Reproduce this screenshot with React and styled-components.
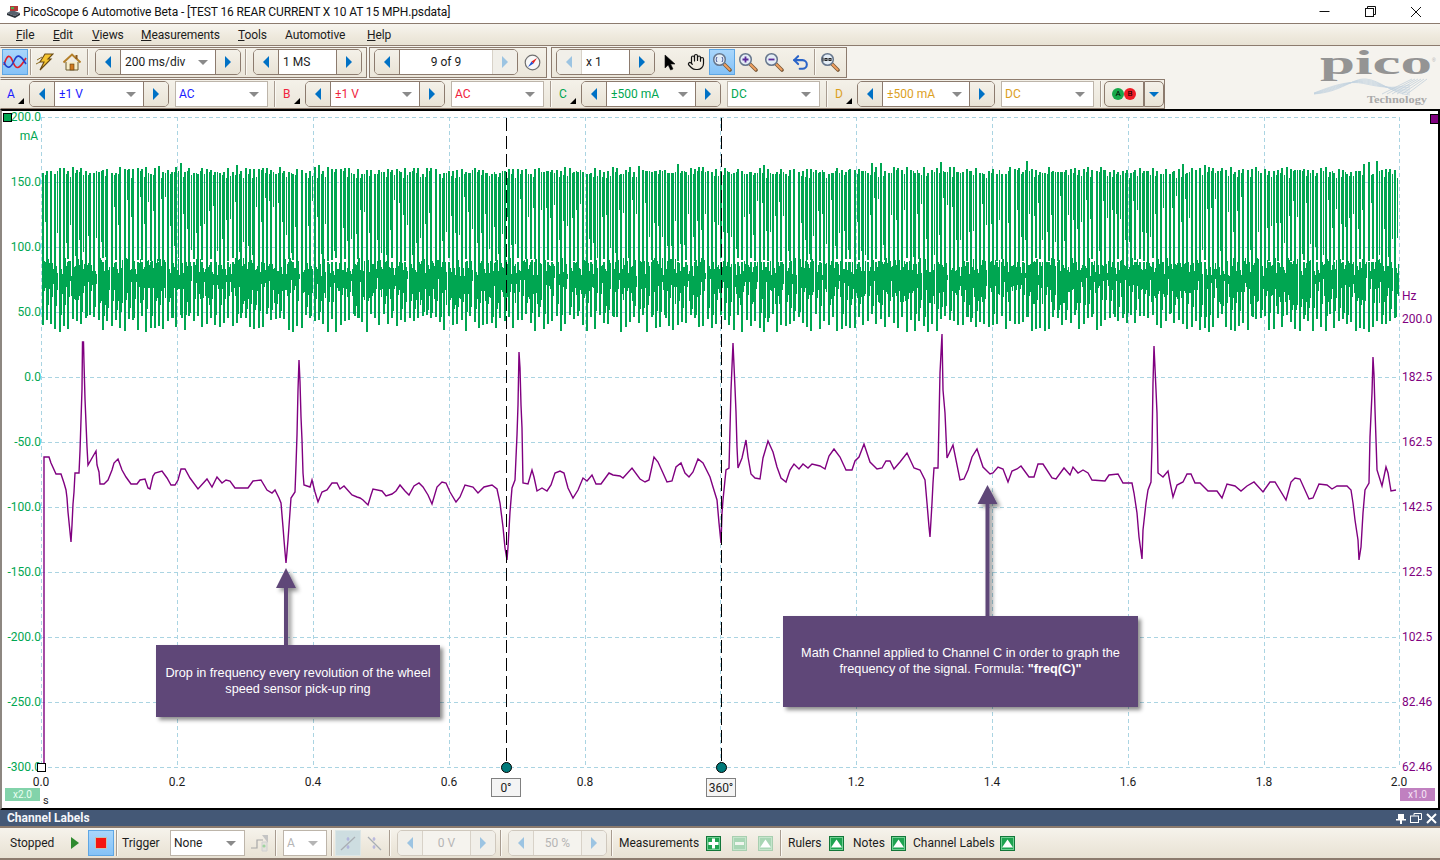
import React from "react";
import styled, { createGlobalStyle, css } from "styled-components";
import { Hand, Undo2 } from "lucide-react";

const UI_FONT = `Roboto, "Noto Sans", sans-serif`;
const LINE = "#8c7b6e";

const Global = createGlobalStyle`
  html, body { margin: 0; padding: 0; background: #fff; }
  #root { width: 1440px; height: 860px; overflow: hidden; }
  * { box-sizing: border-box; }
`;

const Page = styled.div`
  width: 1440px; height: 860px; display: flex; flex-direction: column;
  font: 12px/16px ${UI_FONT}; color: #1c1c1c; background: #f5f3ee;
`;
const TitleBar = styled.div`
  height: 23px; flex: none; display: flex; align-items: center; background: #fff; padding-left: 6px; color: #111;
`;
const TitleText = styled.span` margin-left: 2px; letter-spacing: -0.12px; `;
const WindowButtons = styled.div` margin-left: auto; display: flex; margin-right: 1px; `;
const WindowButton = styled.div` width: 46px; height: 20px; display: flex; align-items: center; justify-content: center; `;
const MenuBar = styled.div`
  height: 23px; flex: none; display: flex; align-items: center; padding-left: 16px;
  border-top: 1px solid ${LINE}; border-bottom: 1px solid ${LINE};
  background: linear-gradient(180deg, #f7f5ef 0%, #efeade 55%, #e8e2d4 100%);
`;
const MenuItem = styled.div` width: ${(p) => p.$w}px; flex: none; white-space: nowrap; letter-spacing: -0.1px; `;
const TopRow = styled.div` height: 63px; flex: none; display: flex; background: #f5f3ee; `;
const ToolStack = styled.div` flex: none; width: 1310px; `;
const ToolRow = styled.div` display: flex; height: ${(p) => p.$h}px; padding-top: 1px; `;
const Group = styled.div`
  width: ${(p) => p.$w}px; margin-left: ${(p) => p.$ml || 0}px; flex: none; display: flex; align-items: center;
  padding-bottom: ${(p) => p.$pb || 0}px;
  border: 1px solid ${LINE}; border-left-color: ${(p) => (p.$open ? "transparent" : LINE)};
  background: linear-gradient(180deg, #f4f1e9 0%, #ebe6da 100%);
`;
const Sep = styled.div`
  width: 2px; height: ${(p) => p.$h || 26}px; margin-left: ${(p) => p.$ml || 0}px; flex: none;
  background: linear-gradient(90deg, #a89c90 50%, #fbf9f4 50%);
`;
const ToolBtn = styled.div`
  width: 26px; height: 26px; margin-left: ${(p) => p.$ml || 0}px; flex: none;
  display: flex; align-items: center; justify-content: center; border: 1px solid transparent;
  ${(p) => p.$active && css`
    border-color: #5ea6e4; background: linear-gradient(180deg, #a9d6fb 0%, #85c2f7 100%);
  `}
  ${(p) => p.$muted && css`
    border-color: #dce6e6; background: #cddde0;
  `}
`;
const SpinBox = styled.div`
  width: ${(p) => p.$w}px; height: 26px; margin-left: ${(p) => p.$ml || 0}px; flex: none; display: flex;
  border: 1px solid ${(p) => (p.$off ? "#cfc8bd" : LINE)}; border-radius: 5px; overflow: hidden;
`;
const SpinBtn = styled.div`
  width: 25px; flex: none; display: flex; align-items: center; justify-content: center;
  border-${(p) => (p.$side === "left" ? "right" : "left")}: 1px solid ${(p) => (p.$off ? "#d8d2c8" : LINE)};
  background: ${(p) => (p.$off ? "#f1efe9" : "linear-gradient(180deg,#f4f1e9,#e9e3d6)")};
`;
const SpinField = styled.div`
  flex: 1; min-width: 0; background: ${(p) => (p.$off ? "#f5f3ee" : "#fff")}; display: flex; align-items: center;
  justify-content: ${(p) => (p.$center ? "center" : "space-between")}; padding: 0 ${(p) => (p.$center ? 0 : 7)}px 0 ${(p) => (p.$center ? 0 : 4)}px;
  color: ${(p) => p.$c || "#1c1c1c"}; white-space: nowrap;
`;
const Arrow = styled.span`
  width: 0; height: 0; border-top: 6px solid transparent; border-bottom: 6px solid transparent;
  ${(p) => (p.$dir === "left" ? "border-right" : "border-left")}: 6px solid ${(p) => (p.$off ? "#9cc4e2" : "#0071c5")};
`;
const Caret = styled.span`
  width: 0; height: 0; flex: none; border-left: 5px solid transparent; border-right: 5px solid transparent;
  border-top: 5px solid ${(p) => p.$c || (p.$off ? "#b5b5b5" : "#8a8a8a")};
`;
const SelectBox = styled.div`
  width: ${(p) => p.$w}px; height: 26px; margin-left: ${(p) => p.$ml || 0}px; flex: none; display: flex;
  align-items: center; justify-content: space-between; background: #fff; border: 1px solid #bdb5aa;
  padding: 0 8px 0 3px; color: ${(p) => p.$c || "#1c1c1c"};
`;
const ChannelTag = styled.div`
  position: relative; width: ${(p) => p.$w}px; height: 26px; flex: none; display: flex; align-items: center;
  padding-left: ${(p) => p.$pl}px; color: ${(p) => p.$c};
`;
const CornerMark = styled.span`
  position: absolute; left: ${(p) => p.$x}px; bottom: 3px; width: 0; height: 0;
  border-left: 6px solid transparent; border-bottom: 6px solid #000;
`;
const ProbeBtn = styled.div`
  width: ${(p) => p.$w}px; height: 26px; margin-left: ${(p) => p.$ml || 0}px; flex: none; display: flex; align-items: center; justify-content: center;
  border: 1px solid ${LINE}; border-radius: ${(p) => p.$r}; background: linear-gradient(180deg,#f4f1e9,#e9e3d6);
`;
const Dot = styled.span`
  width: 12px; height: 12px; border-radius: 50%; background: ${(p) => p.$c}; color: #000;
  font: 8px/12px ${UI_FONT}; text-align: center;
`;
const LogoBox = styled.div` flex: 1; display: flex; `;

const Plot = styled.div`
  position: relative; flex: none; height: 701px; background: #fff;
  border-top: 2px solid #000; border-bottom: 2px solid #000; border-left: 2px solid #8d8781; border-right: 2px solid #000;
`;
const Chart = styled.svg` display: block; overflow: visible; `;
const Callout = styled.div`
  position: absolute; left: ${(p) => p.$x}px; top: ${(p) => p.$y}px; width: ${(p) => p.$w}px; height: ${(p) => p.$h}px;
  padding-bottom: ${(p) => p.$pb || 0}px;
  display: flex; align-items: center; justify-content: center; text-align: center;
  background: #5f4778; color: #fff; font: 12.7px/16px "Liberation Sans", Arial, sans-serif;
  box-shadow: 3px 3px 4px rgba(0,0,0,0.45);
`;
const DockBar = styled.div`
  height: 16px; flex: none; display: flex; align-items: center; padding: 0 3px 0 7px; background: #445876;
  color: #f4f6fa; font-weight: 700;
`;
const DockIcons = styled.div` margin-left: auto; display: flex; gap: 4px; align-items: center; `;
const BottomBar = styled.div`
  height: 34px; flex: none; display: flex; align-items: center; border-top: 2px solid ${LINE}; border-bottom: 2px solid ${LINE};
  background: linear-gradient(180deg, #f6f3ec 0%, #efeadf 50%, #e8e2d4 100%);
`;
const BarLabel = styled.div`
  width: ${(p) => p.$w}px; margin-left: ${(p) => p.$ml || 0}px; flex: none; white-space: nowrap;
`;
const SquareBtn = styled.div`
  width: 15px; height: 15px; margin-left: ${(p) => p.$ml || 0}px; flex: none; display: flex; align-items: center; justify-content: center;
  border: 1px solid ${(p) => (p.$off ? "#a8cfb0" : "#13773a")};
  background: ${(p) => (p.$off ? "#a9d6b5" : "#1ea350")}; box-shadow: inset 0 0 0 1px ${(p) => (p.$off ? "#c5e5cc" : "#6fcf92")};
`;

/* ---------- icons ---------- */
const WaveIcon = () => (
  <svg width="24" height="18" viewBox="0 0 24 18" fill="none" strokeWidth="1.6">
    <path d="M1 12C4 1 7 1 10 9S16 17 23 5" stroke="#e0202a" />
    <path d="M1 9C4 17 8 15 11 8S17 1 23 11" stroke="#2040c8" />
  </svg>
);
const BoltIcon = () => (
  <svg width="18" height="18" viewBox="0 0 18 18">
    <path d="M9 1H17L12 6H15L4 17L8 9H4L9 1Z" fill="#f4c430" stroke="#6b4a12" strokeWidth="1.1" />
    <path d="M1 7L6 4M0 11L4 9" stroke="#8a6a20" strokeWidth="1" />
  </svg>
);
const HomeIcon = () => (
  <svg width="18" height="18" viewBox="0 0 18 18">
    <path d="M3 9V17H15V9" fill="#f7ecc8" stroke="#6b5a30" />
    <path d="M0.5 9.5L9 1.5L17.5 9.5" fill="none" stroke="#b5802a" strokeWidth="2" />
    <rect x="12.5" y="2" width="2" height="4" fill="#8a5a20" />
    <rect x="7" y="11" width="4" height="6" fill="#d07a20" stroke="#5a3a10" strokeWidth="0.6" />
  </svg>
);
const CompassIcon = () => (
  <svg width="17" height="17" viewBox="0 0 17 17">
    <circle cx="8.5" cy="8.5" r="7.3" fill="#f8f8f8" stroke="#707070" strokeWidth="1.2" />
    <path d="M13 4L9.5 9.5L7.5 7.5Z" fill="#e02020" />
    <path d="M4 13L7.5 7.5L9.5 9.5Z" fill="#2050d0" />
  </svg>
);
const PointerIcon = () => (
  <svg width="13" height="17" viewBox="0 0 13 17">
    <path d="M1 1V14L4.2 11L6.6 16L9 15L6.6 10H11Z" fill="#000" stroke="#111" strokeWidth="0.6" />
  </svg>
);
const Magnifier = ({ mark }) => (
  <svg width="20" height="20" viewBox="0 0 20 20" fill="none">
    <path d="M11.5 11.5L18 18" stroke="#7a5a3a" strokeWidth="3.6" strokeLinecap="round" />
    <path d="M12 12L17.6 17.6" stroke="#f0a060" strokeWidth="2" strokeLinecap="round" />
    <circle cx="7.5" cy="7.5" r="5.8" fill="#e4edf6" stroke="#66768c" strokeWidth="1.5" />
    {mark === "plus" && <path d="M4.5 7.5H10.5M7.5 4.5V10.5" stroke="#5a2a9a" strokeWidth="1.8" />}
    {mark === "minus" && <path d="M4.5 7.5H10.5" stroke="#5a2a9a" strokeWidth="1.8" />}
    {mark === "hundred" && <path d="M3 5.5V9.5M5 6.5h2v2H5zM9 6.5h2v2H9z" stroke="#222" strokeWidth="1.1" />}
    {mark === "fit" && <path d="M5 5C4 6.5 4 8.5 5 10M10 5C11 6.5 11 8.5 10 10" stroke="#3a4a90" strokeWidth="1" />}
  </svg>
);
const PlayIcon = () => (
  <svg width="8" height="12" viewBox="0 0 8 12"><path d="M0 0L8 6L0 12Z" fill="#2f8a2f" /></svg>
);
const StopIcon = () => (
  <svg width="12" height="12" viewBox="0 0 12 12"><rect x="0.5" y="0.5" width="11" height="11" fill="#f5150f" stroke="#c8c0b0" /></svg>
);
const EdgeStepIcon = () => (
  <svg width="20" height="18" viewBox="0 0 20 18" fill="none">
    <path d="M1 14H7V6H13" stroke="#a8a8a8" strokeWidth="1.2" />
    <path d="M12 1H18V9Z" fill="#c4c4c4" />
    <path d="M12 8H17V17H12Z" fill="#e4e2dc" stroke="#d0d0d0" />
    <circle cx="14" cy="12" r="1.6" fill="#9fd49f" />
  </svg>
);
const EdgeCross = ({ rise }) => (
  <svg width="16" height="16" viewBox="0 0 16 16" fill="none">
    <path d={rise ? "M1 15L15 2" : "M2 2L15 15"} stroke="#a9aeb3" strokeWidth="1.3" />
    <path d="M8 2V6M6.5 4H9.5M8 10V14M6.5 12H9.5" stroke="#a8a8dc" strokeWidth="1" />
  </svg>
);
const PlusGlyph = () => <svg width="11" height="11"><path d="M4 0.5h3v3.5h3.5v3H7v3.5H4V7H0.5V4H4z" fill="#fff" /></svg>;
const MinusGlyph = () => <svg width="11" height="11"><rect x="1" y="4" width="9" height="3" fill="#f0f5ee" /></svg>;
const UpGlyph = () => <svg width="11" height="9"><path d="M5.5 0.5L11 8.5H0Z" fill="#fff" /></svg>;

const PicoLogo = () => {
  const lines = [0, 1, 2, 3, 4, 5];
  return (
    <Chart width="130" height="63" viewBox="1310 46 130 63">
      <text x="1320" y="74" fontFamily="'Liberation Serif', serif" fontWeight="700" fontSize="33" fill="#949494" textLength="112" lengthAdjust="spacingAndGlyphs">pico</text>
      <text x="1432" y="62" fontFamily="'Liberation Sans', sans-serif" fontSize="5" fill="#b0b0b0">®</text>
      {lines.map((i) => (
        <path key={`a${i}`} fill="none" stroke="#c3d2e0" strokeWidth="0.7"
          d={`M1314 ${94 - i * 0.2}C1342 ${92 - i * 2} 1352 ${78 + i * 0.6} 1366 ${79 + i}S1392 ${94 - i} 1410 ${95 - i * 2}`} />
      ))}
      {lines.map((i) => (
        <path key={`b${i}`} fill="none" stroke="#bccbd9" strokeWidth="0.7"
          d={`M${1382 + i * 5} 94L${1412 + i * 3} 79`} />
      ))}
      <text x="1367" y="103" fontFamily="'Liberation Serif', serif" fontWeight="700" fontSize="10.5" fill="#a9a9a9" textLength="60" lengthAdjust="spacingAndGlyphs">Technology</text>
    </Chart>
  );
};

/* ---------- chart data ---------- */
const TRACE = [
  [44,767],[44,457],[49,457],[51,463],[56,474],[61,474],[64,483],[66,490],[67,498],[68,512],[69,522],[70,532],[71,542],[72,525],[73,504],[74,492],[75,473],[79,473],[80,451],[81,420],[82,389],[82.5,342],[83.5,342],[84,363],[85,399],[86,423],[87,447],[88,465],[96,451],[97,465],[99,472],[100,484],[104,484],[108,480],[112,470],[114,463],[118,459],[122,470],[126,477],[131,484],[137,484],[140,480],[145,479],[148,488],[150,489],[153,476],[155,473],[162,471],[167,478],[171,485],[175,485],[178,480],[181,469],[185,469],[190,478],[198,489],[207,479],[212,487],[217,477],[222,483],[226,480],[230,481],[235,488],[248,488],[253,481],[261,480],[267,490],[272,493],[275,490],[279,498],[281,503],[283,527],[284,540],[285,552],[286,563],[287,552],[288,540],[290,512],[291,498],[295,492],[296,465],[297,435],[298,390],[299,360],[300,382],[301,417],[302,440],[303,473],[304,485],[310,487],[312,480],[315,492],[318,502],[322,492],[327,490],[332,483],[337,483],[340,489],[344,486],[352,495],[357,497],[360,498],
  [363,500],[368,505],[371,495],[373,489],[382,491],[386,496],[392,494],[396,491],[400,485],[405,491],[409,495],[414,486],[419,483],[423,487],[428,495],[432,504],[437,487],[442,482],[446,483],[450,492],[456,502],[460,497],[465,485],[473,487],[478,493],[484,487],[492,485],[497,489],[500,503],[503,527],[505,548],[507,560],[508,547],[510,512],[512,488],[515,480],[517,435],[518,405],[519,352],[520,368],[521,405],[522,428],[523,483],[528,484],[532,470],[534,477],[537,491],[542,488],[547,491],[551,485],[555,473],[560,471],[564,473],[568,488],[573,498],[578,490],[583,478],[587,481],[592,475],[596,484],[601,484],[609,473],[613,475],[620,476],[623,478],[632,468],[640,479],[645,482],[649,480],[654,457],[658,462],[663,473],[667,482],[672,481],[676,467],[681,463],[685,473],[689,477],[693,472],[698,459],[703,463],[710,477],[713,487],[717,500],[719,523],[721,543],[722,513],[723,500],[726,470],[729,468],[731,390],[733,343],[735,388],[736,412],[737,447],[738,468],[742,458],[746,440],[748,457],[751,474],[755,478],[760,479],
  [763,458],[768,441],[773,452],[777,467],[781,478],[786,482],[790,470],[794,464],[799,469],[803,464],[808,468],[812,464],[820,466],[825,469],[829,456],[834,449],[840,457],[846,470],[852,470],[855,461],[859,457],[864,444],[870,462],[877,469],[882,468],[886,461],[890,461],[894,469],[900,462],[907,453],[914,468],[920,470],[925,480],[927,503],[929,527],[930,537],[932,503],[933,483],[934,468],[938,468],[940,373],[942,334],[943,390],[945,413],[947,458],[953,445],[960,480],[964,479],[968,470],[972,457],[977,449],[983,467],[990,474],[993,473],[998,467],[1003,469],[1008,482],[1012,471],[1017,469],[1021,466],[1029,477],[1034,477],[1038,464],[1043,464],[1052,478],[1056,479],[1064,468],[1070,475],[1073,467],[1078,473],[1083,470],[1088,473],[1092,480],[1105,481],[1109,475],[1118,474],[1123,483],[1132,483],[1134,493],[1137,513],[1139,537],[1142,559],[1143,530],[1146,503],[1148,490],[1151,482],[1152,447],[1153,383],[1154,346],[1156,390],[1157,413],[1158,473],[1163,477],[1168,471],[1170,482],[1173,497],[1177,485],[1183,482],[1187,474],[1191,474],[1195,483],[1200,483],[1208,491],[1217,491],[1222,498],[1227,484],[1235,486],[1241,491],[1247,486],[1254,482],[1263,492],[1270,482],[1275,482],[1286,500],[1291,482],[1295,478],[1300,479],[1309,499],[1313,498],[1319,484],[1327,485],[1332,489],[1337,486],[1347,486],[1351,490],[1353,503],[1355,520],[1358,540],[1359,560],[1361,547],[1363,513],[1365,490],[1369,483],[1370,437],[1372,393],[1373,357],[1374,375],[1375,410],[1377,470],[1382,486],[1386,467],[1388,473],[1391,491],[1396,490],
];
const tracePath = "M" + TRACE.map((p) => p.join(" ")).join("L");

const makeGreen = () => {
  let seed = 20240611;
  const rnd = () => {
    seed = (seed * 1664525 + 1013904223) >>> 0;
    return seed / 4294967296;
  };
  const between = (a, b) => a + rnd() * (b - a);
  let main = "", thin = "", low = "";
  const period = 4.32;
  for (let i = 0; i * period < 1356; i++) {
    const x = Math.round(42.5 + i * period);
    const spike = rnd() < 0.05 ? 6 : 0;
    const top = Math.round(between(167, 174) - spike);
    main += `M${x} ${top}V${Math.round(between(258, 270))}`;
    const gx = x + 2;
    if (rnd() < 0.85) {
      const a = Math.round(between(170, 178));
      thin += `M${gx} ${a}V${Math.round(between(196, 258))}`;
    }
    thin += `M${gx} ${Math.round(between(258, 276))}V${Math.round(between(278, 306))}`;
    low += `M${x} 262V${Math.round(between(314, 332))}`;
    low += `M${x + 1} ${Math.round(between(258, 272))}V${Math.round(between(286, 318))}`;
    if (rnd() < 0.5) thin += `M${gx + 1} ${Math.round(between(260, 276))}V${Math.round(between(282, 304))}`;
  }
  return { main, thin, low };
};
const GREEN = makeGreen();

const XS = Array.from({ length: 11 }, (_, i) => Math.round(41.3 + 135.8 * i));
const YS = Array.from({ length: 11 }, (_, i) => 117 + 65 * i);
const LEFT = ["200.0", "150.0", "100.0", "50.0", "0.0", "-50.0", "-100.0", "-150.0", "-200.0", "-250.0", "-300.0"];
const RIGHT = [null, null, null, "200.0", "182.5", "162.5", "142.5", "122.5", "102.5", "82.46", "62.46"];
const RIGHT_Y = [0, 0, 0, 319, 377, 442, 507, 572, 637, 702, 767];
const BOTTOM = ["0.0", "0.2", "0.4", "0.6", "0.8", null, "1.2", "1.4", "1.6", "1.8", "2.0"];

const GREEN_C = "#00a651", PURPLE = "#800080";

const UpArrow = ({ x, tip, base, end }) => (
  <path d={`M${x - 2} ${end}V${base}H${x - 10}L${x} ${tip}L${x + 10} ${base}H${x + 2}V${end}Z`} fill="#5f4778" filter="url(#softShadow)" />
);
const RulerTag = ({ x, w, text }) => (
  <g>
    <rect x={x + 0.5} y="778.5" width={w} height="18" fill="#f4f4f4" stroke="#808080" />
    <text x={x + w / 2 + 0.5} y="792" textAnchor="middle" fontSize="12" fill="#1c1c1c">{text}</text>
  </g>
);
const Handle = ({ x }) => <circle cx={x} cy="767.5" r="5" fill="#007b7b" stroke="#000" />;

const ScopeChart = () => (
  <Chart width="1436" height="697" viewBox="2 111 1436 697" fontFamily={UI_FONT}>
    <defs>
      <filter id="softShadow" x="-60%" y="-10%" width="240%" height="120%">
        <feDropShadow dx="3" dy="3" stdDeviation="2" floodColor="#000" floodOpacity="0.45" />
      </filter>
    </defs>
    <g stroke="#aad4e2" strokeDasharray="4 3" shapeRendering="crispEdges">
      {XS.map((x) => <line key={x} x1={x + 0.5} x2={x + 0.5} y1="117" y2="767" />)}
      {YS.map((y) => <line key={y} x1="41" x2="1399" y1={y + 0.5} y2={y + 0.5} />)}
    </g>
    <g fill="none" stroke={GREEN_C} shapeRendering="crispEdges">
      <path d={GREEN.main} strokeWidth="2" />
      <path d={GREEN.thin} strokeWidth="1" />
      <path d={GREEN.low} strokeWidth="1.6" />
    </g>
    <path d={tracePath} fill="none" stroke={PURPLE} strokeWidth="1.4" />
    <g stroke="#000" strokeWidth="1.6" strokeDasharray="13 5" shapeRendering="crispEdges">
      <line x1="506.5" x2="506.5" y1="118" y2="762" />
      <line x1="721.5" x2="721.5" y1="118" y2="762" />
    </g>
    <UpArrow x={286} tip={568} base={588} end={645} />
    <UpArrow x={987.5} tip={485} base={504} end={616} />
    <Handle x={506.5} />
    <Handle x={721.5} />
    <RulerTag x={491} w={29} text="0°" />
    <RulerTag x={706} w={29} text="360°" />
    <g fontSize="12" fill={GREEN_C} textAnchor="end">
      {LEFT.map((t, i) => <text key={t} x="41" y={YS[i] + 4}>{t}</text>)}
      <text x="38" y="140">mA</text>
    </g>
    <g fontSize="12" fill={PURPLE}>
      <text x="1402" y="300">Hz</text>
      {RIGHT.map((t, i) => t && <text key={t} x="1402" y={RIGHT_Y[i] + 4}>{t}</text>)}
    </g>
    <g fontSize="12" fill="#1c1c1c" textAnchor="middle">
      {BOTTOM.map((t, i) => t && <text key={t} x={XS[i]} y="786">{t}</text>)}
    </g>
    <text x="43" y="804" fontSize="11" fill="#1c1c1c">s</text>
    <rect x="3.5" y="113.5" width="8" height="8" fill={GREEN_C} stroke="#000" shapeRendering="crispEdges" />
    <rect x="1430" y="114" width="8" height="9" fill={PURPLE} stroke="#000" shapeRendering="crispEdges" />
    <rect x="37" y="763" width="8" height="8" fill="#fff" stroke="#000" shapeRendering="crispEdges" />
    <rect x="5" y="788" width="35" height="13" fill="#82d3aa" />
    <text x="22.5" y="798" fontSize="10" fill="#eafff3" textAnchor="middle">x2.0</text>
    <rect x="1400" y="788" width="35" height="13" fill="#c080c0" />
    <text x="1417.5" y="798" fontSize="10" fill="#f6e6f6" textAnchor="middle">x1.0</text>
  </Chart>
);

/* ---------- composed controls ---------- */
const Spinner = ({ w, ml, value, color, caret, center, off, leftOff, rightOff }) => (
  <SpinBox $w={w} $ml={ml} $off={off}>
    <SpinBtn $side="left" $off={off || leftOff}><Arrow $dir="left" $off={off || leftOff} /></SpinBtn>
    <SpinField $c={color} $center={center} $off={off}>
      <span>{value}</span>
      {caret && <Caret />}
    </SpinField>
    <SpinBtn $side="right" $off={off || rightOff}><Arrow $dir="right" $off={off || rightOff} /></SpinBtn>
  </SpinBox>
);
const Channel = ({ name, color, tagW, pl, markX, range, coupling, spinW }) => (
  <>
    <ChannelTag $w={tagW} $pl={pl} $c={color}>{name}<CornerMark $x={markX} /></ChannelTag>
    <Spinner w={spinW} value={range} color={color} caret />
    <SelectBox $w={93} $ml={6} $c={color}><span>{coupling}</span><Caret /></SelectBox>
    <Sep $ml={6} />
  </>
);
const M = ({ u, rest, w }) => <MenuItem $w={w}>{u ? <u>{u}</u> : null}{rest}</MenuItem>;

export default function App() {
  return (
    <Page>
      <Global />
      <TitleBar>
        <svg width="15" height="14" viewBox="0 0 15 14">
          <path d="M1 8L9 11L14 8L6 5Z" fill="#57606c" />
          <path d="M1 8V10L9 13L14 10V8L9 11Z" fill="#2c323a" />
          <rect x="4" y="1" width="8" height="5" fill="#b03a3a" />
          <rect x="5" y="2" width="3" height="2" fill="#4ab04a" />
        </svg>
        <TitleText>PicoScope 6 Automotive Beta - [TEST 16 REAR CURRENT X 10 AT 15 MPH.psdata]</TitleText>
        <WindowButtons>
          <WindowButton>
            <svg width="11" height="11"><path d="M0.5 5.5H10.5" stroke="#111" /></svg>
          </WindowButton>
          <WindowButton>
            <svg width="11" height="11" fill="none" stroke="#111"><path d="M2.5 2.5V0.5H10.5V8.5H8.5" /><rect x="0.5" y="2.5" width="8" height="8" /></svg>
          </WindowButton>
          <WindowButton>
            <svg width="12" height="12" stroke="#111"><path d="M1 1L11 11M11 1L1 11" /></svg>
          </WindowButton>
        </WindowButtons>
      </TitleBar>
      <MenuBar>
        <M w={37} u="F" rest="ile" />
        <M w={39} u="E" rest="dit" />
        <M w={49} u="V" rest="iews" />
        <M w={97} u="M" rest="easurements" />
        <M w={47} u="T" rest="ools" />
        <M w={82} rest="Automotive" />
        <M w={40} u="H" rest="elp" />
      </MenuBar>
      <TopRow>
        <ToolStack>
          <ToolRow $h={32}>
            <Group $w={367} $open $pb={1}>
              <ToolBtn $ml={1} $active><WaveIcon /></ToolBtn>
              <Sep $ml={2} />
              <ToolBtn><BoltIcon /></ToolBtn>
              <ToolBtn $ml={1}><HomeIcon /></ToolBtn>
              <Sep $ml={2} />
              <Spinner ml={6} w={146} value="200 ms/div" caret />
              <Sep $ml={4} />
              <Spinner ml={6} w={109} value="1 MS" />
            </Group>
            <Group $w={178} $ml={2} $pb={1}>
              <Spinner ml={4} w={144} value="9 of 9" center rightOff />
              <ToolBtn $ml={1}><CompassIcon /></ToolBtn>
            </Group>
            <Group $w={296} $ml={4} $pb={1}>
              <Spinner ml={4} w={99} value="x 1" leftOff />
              <ToolBtn $ml={2}><PointerIcon /></ToolBtn>
              <ToolBtn><Hand size={18} color="#111" strokeWidth={1.6} /></ToolBtn>
              <ToolBtn $active><Magnifier mark="fit" /></ToolBtn>
              <ToolBtn><Magnifier mark="plus" /></ToolBtn>
              <ToolBtn><Magnifier mark="minus" /></ToolBtn>
              <ToolBtn><Undo2 size={19} color="#2a64c8" strokeWidth={2.6} /></ToolBtn>
              <Sep $ml={1} />
              <ToolBtn $ml={1}><Magnifier mark="hundred" /></ToolBtn>
            </Group>
          </ToolRow>
          <ToolRow $h={31}>
            <Group $w={1165} $open>
              <Channel name="A" color="#1a1aff" tagW={28} pl={6} markX={17} range="±1 V" coupling="AC" spinW={140} />
              <Channel name="B" color="#f0243c" tagW={29} pl={7} markX={18} range="±1 V" coupling="AC" spinW={140} />
              <Channel name="C" color="#00a651" tagW={29} pl={7} markX={18} range="±500 mA" coupling="DC" spinW={140} />
              <Channel name="D" color="#dca01e" tagW={29} pl={7} markX={18} range="±500 mA" coupling="DC" spinW={138} />
              <ProbeBtn $w={40} $ml={2} $r="5px 0 0 5px">
                <Dot $c="#17a84a">A</Dot>
                <Dot $c="#ee1c25">B</Dot>
              </ProbeBtn>
              <ProbeBtn $w={20} $r="0 5px 5px 0"><Caret $c="#0071c5" /></ProbeBtn>
            </Group>
          </ToolRow>
        </ToolStack>
        <LogoBox><PicoLogo /></LogoBox>
      </TopRow>
      <Plot>
        <ScopeChart />
        <Callout $x={154} $y={534} $w={284} $h={72}>
          <span>Drop in frequency every revolution of the wheel<br />speed sensor pick-up ring</span>
        </Callout>
        <Callout $x={781} $y={505} $w={355} $h={91} $pb={2}>
          <span>Math Channel applied to Channel C in order to graph the<br />frequency of the signal. Formula: <b>"freq(C)"</b></span>
        </Callout>
      </Plot>
      <DockBar>
        Channel Labels
        <DockIcons>
          <svg width="10" height="11"><path d="M2 1H8V6H2ZM0 6H10V7.5H0ZM4 7.5H6V11H4Z" fill="#fff" /></svg>
          <svg width="12" height="10" fill="none" stroke="#fff"><path d="M4 2.5V0.5H11.5V6.5H9" /><rect x="0.5" y="3" width="8" height="6.5" /></svg>
          <svg width="11" height="11" stroke="#fff" strokeWidth="2"><path d="M1 1L10 10M10 1L1 10" /></svg>
        </DockIcons>
      </DockBar>
      <BottomBar>
        <BarLabel $ml={10} $w={52}>Stopped</BarLabel>
        <ToolBtn><PlayIcon /></ToolBtn>
        <ToolBtn $active><StopIcon /></ToolBtn>
        <Sep $ml={2} />
        <BarLabel $ml={4} $w={48}>Trigger</BarLabel>
        <SelectBox $w={75}><span>None</span><Caret /></SelectBox>
        <ToolBtn $ml={2}><EdgeStepIcon /></ToolBtn>
        <Sep $ml={2} />
        <SelectBox $w={44} $ml={6} $c="#b5b5b5"><span>A</span><Caret $off /></SelectBox>
        <Sep $ml={4} />
        <ToolBtn $ml={2} $muted><EdgeCross rise /></ToolBtn>
        <ToolBtn><EdgeCross /></ToolBtn>
        <Sep $ml={2} />
        <Spinner ml={6} w={99} value="0 V" color="#b5b5b5" center off />
        <Sep $ml={4} />
        <Spinner ml={6} w={99} value="50 %" color="#b5b5b5" center off />
        <Sep $ml={4} />
        <BarLabel $ml={6} $w={87}>Measurements</BarLabel>
        <SquareBtn><PlusGlyph /></SquareBtn>
        <SquareBtn $ml={11} $off><MinusGlyph /></SquareBtn>
        <SquareBtn $ml={11} $off><UpGlyph /></SquareBtn>
        <Sep $ml={7} />
        <BarLabel $ml={6} $w={41}>Rulers</BarLabel>
        <SquareBtn><UpGlyph /></SquareBtn>
        <BarLabel $ml={9} $w={38}>Notes</BarLabel>
        <SquareBtn><UpGlyph /></SquareBtn>
        <BarLabel $ml={7} $w={87}>Channel Labels</BarLabel>
        <SquareBtn><UpGlyph /></SquareBtn>
      </BottomBar>
    </Page>
  );
}
